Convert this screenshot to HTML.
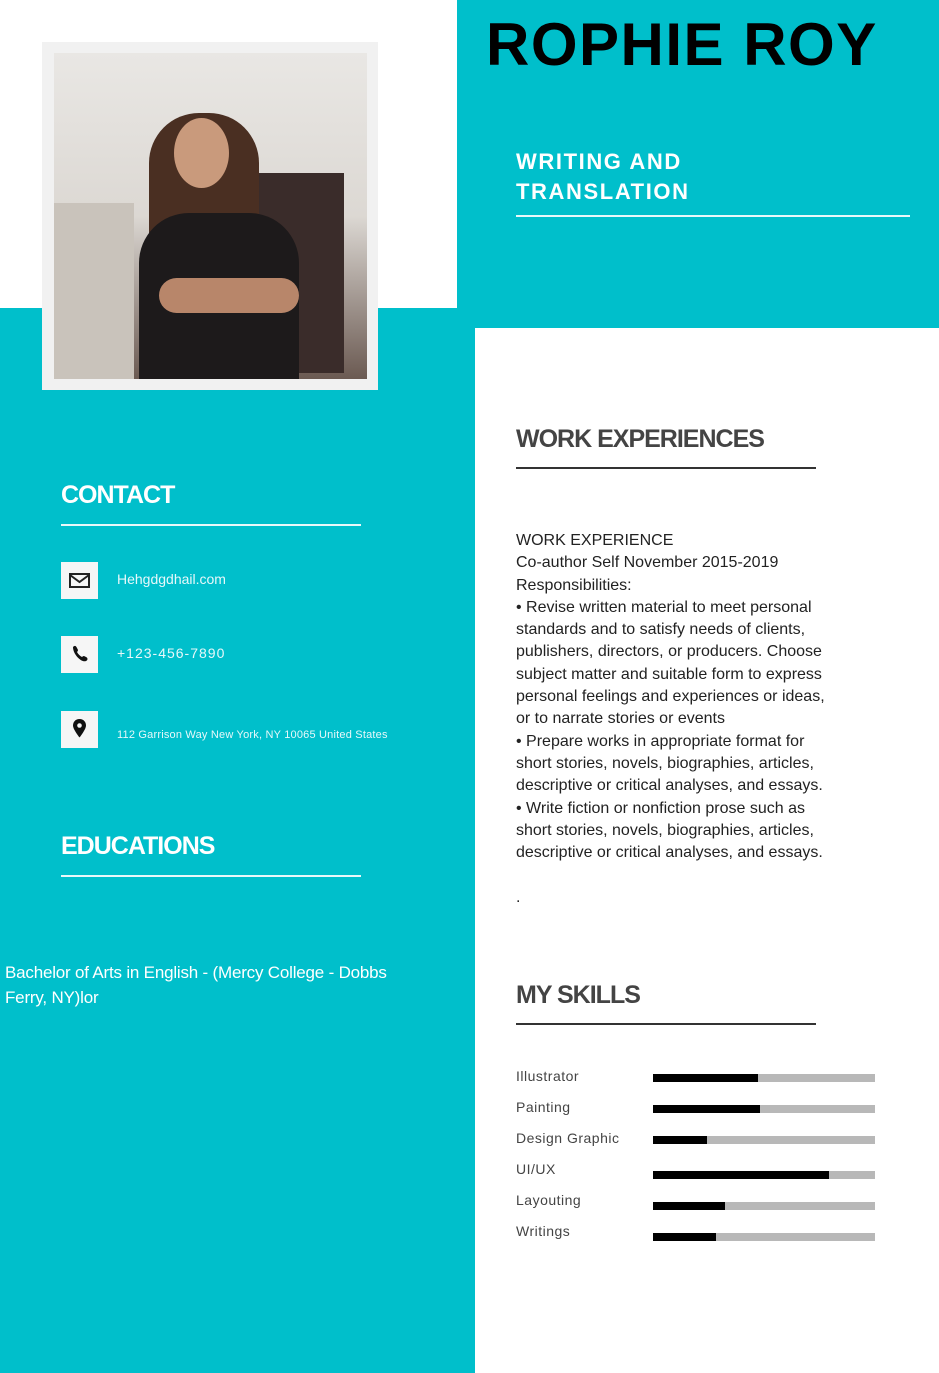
<!DOCTYPE html>
<html><head><meta charset="utf-8"><style>
*{margin:0;padding:0;box-sizing:border-box}
body{width:939px;height:1373px;position:relative;background:#00bfcb;font-family:"Liberation Sans",sans-serif;overflow:hidden}
.a{position:absolute}
.wtl{left:0;top:0;width:457px;height:308px;background:#fff}
.wbr{left:475px;top:328px;width:464px;height:1045px;background:#fff}
.frame{left:42px;top:42px;width:336px;height:348px;background:#f1f1f1}
.photo{left:54px;top:53px;width:313px;height:326px;overflow:hidden;background:linear-gradient(180deg,#e9e7e4 0%,#dcd8d3 50%,#6b5a52 100%)}
.h{font-weight:bold;color:#fff;letter-spacing:-1px}
.ic{width:37px;height:37px;background:#f6f6f6;left:61px}
.ct{color:#e6f8fa;font-size:14px;left:117px}
.bar{left:653px;width:222px;height:8px;background:#b8b8b8}
.bar i{display:block;height:8px;background:#000}
.sk{left:516px;font-size:14px;color:#444;letter-spacing:0.5px}
</style></head><body>
<div class="a wtl"></div>
<div class="a wbr"></div>
<div class="a frame"></div>
<div class="a photo">
 <div class="a" style="left:0;top:150px;width:80px;height:176px;background:#c9c3bb"></div>
 <div class="a" style="left:190px;top:120px;width:100px;height:200px;background:#3a2c2a"></div>
 <div class="a" style="left:95px;top:60px;width:110px;height:200px;border-radius:50px 50px 10px 10px;background:#4a2f22"></div>
 <div class="a" style="left:120px;top:65px;width:55px;height:70px;border-radius:50%;background:#c99a7c"></div>
 <div class="a" style="left:85px;top:160px;width:160px;height:170px;border-radius:50px 50px 0 0;background:#1d1a1b"></div>
 <div class="a" style="left:105px;top:225px;width:140px;height:35px;border-radius:18px;background:#b8866a"></div>
</div>
<div class="a" style="left:486px;top:10px;font-size:60px;font-weight:bold;color:#000;letter-spacing:1.5px">ROPHIE ROY</div>
<div class="a" style="left:516px;top:147px;font-size:22px;font-weight:bold;color:#fff;letter-spacing:1.6px;line-height:30px">WRITING AND<br>TRANSLATION</div>
<div class="a" style="left:516px;top:215px;width:394px;height:2px;background:#e8f8fa"></div>

<div class="a h" style="left:61px;top:481px;font-size:25px">CONTACT</div>
<div class="a" style="left:61px;top:524px;width:300px;height:2px;background:#e8f8fa"></div>
<div class="a ic" style="top:562px"><svg width="37" height="37"><rect x="9" y="12" width="19" height="13" fill="none" stroke="#222" stroke-width="2"/><path d="M9 13l9.5 7 9.5-7" fill="none" stroke="#222" stroke-width="2"/></svg></div>
<div class="a ct" style="top:571px">Hehgdgdhail.com</div>
<div class="a ic" style="top:636px"><svg width="37" height="37"><path d="M12 11c2-2 3-1 4 1l1 2c0 1-1 2-1 2 1 2 3 4 5 5 0 0 1-1 2-1l2 1c2 1 2 3 0 4-4 2-13-6-13-14z" fill="#111"/></svg></div>
<div class="a ct" style="top:645px;letter-spacing:1px">+123-456-7890</div>
<div class="a ic" style="top:711px"><svg width="37" height="37"><path d="M18.5 8c-4 0-6.5 3-6.5 6.5 0 4 6.5 12 6.5 12s6.5-8 6.5-12C25 11 22.5 8 18.5 8z" fill="#111"/><circle cx="18.5" cy="14.5" r="2.3" fill="#f6f6f6"/></svg></div>
<div class="a ct" style="top:729px;font-size:11px;letter-spacing:0.2px">112 Garrison Way New York, NY 10065 United States</div>

<div class="a h" style="left:61px;top:832px;font-size:25px">EDUCATIONS</div>
<div class="a" style="left:61px;top:875px;width:300px;height:2px;background:#e8f8fa"></div>
<div class="a" style="left:5px;top:960px;font-size:17px;color:#fff;line-height:25px;width:410px;letter-spacing:-0.2px">Bachelor of Arts in English - (Mercy College - Dobbs Ferry, NY)lor</div>

<div class="a" style="left:516px;top:425px;font-size:25px;font-weight:bold;color:#444;letter-spacing:-1px">WORK EXPERIENCES</div>
<div class="a" style="left:516px;top:467px;width:300px;height:2px;background:#333"></div>
<div class="a" style="left:516px;top:530px;font-size:16px;color:#222;line-height:22.3px;width:320px">WORK EXPERIENCE<br>Co-author Self November 2015-2019<br>Responsibilities:<br>• Revise written material to meet personal standards and to satisfy needs of clients, publishers, directors, or producers. Choose subject matter and suitable form to express personal feelings and experiences or ideas, or to narrate stories or events<br>• Prepare works in appropriate format for short stories, novels, biographies, articles, descriptive or critical analyses, and essays.<br>• Write fiction or nonfiction prose such as short stories, novels, biographies, articles, descriptive or critical analyses, and essays.<br><br>.</div>

<div class="a" style="left:516px;top:981px;font-size:25px;font-weight:bold;color:#444;letter-spacing:-1px">MY SKILLS</div>
<div class="a" style="left:516px;top:1023px;width:300px;height:2px;background:#333"></div>
<div class="a sk" style="top:1068px">Illustrator</div><div class="a bar" style="top:1074px"><i style="width:105px"></i></div>
<div class="a sk" style="top:1099px">Painting</div><div class="a bar" style="top:1105px"><i style="width:107px"></i></div>
<div class="a sk" style="top:1130px">Design Graphic</div><div class="a bar" style="top:1136px"><i style="width:54px"></i></div>
<div class="a sk" style="top:1161px">UI/UX</div><div class="a bar" style="top:1171px"><i style="width:176px"></i></div>
<div class="a sk" style="top:1192px">Layouting</div><div class="a bar" style="top:1202px"><i style="width:72px"></i></div>
<div class="a sk" style="top:1223px">Writings</div><div class="a bar" style="top:1233px"><i style="width:63px"></i></div>
</body></html>
